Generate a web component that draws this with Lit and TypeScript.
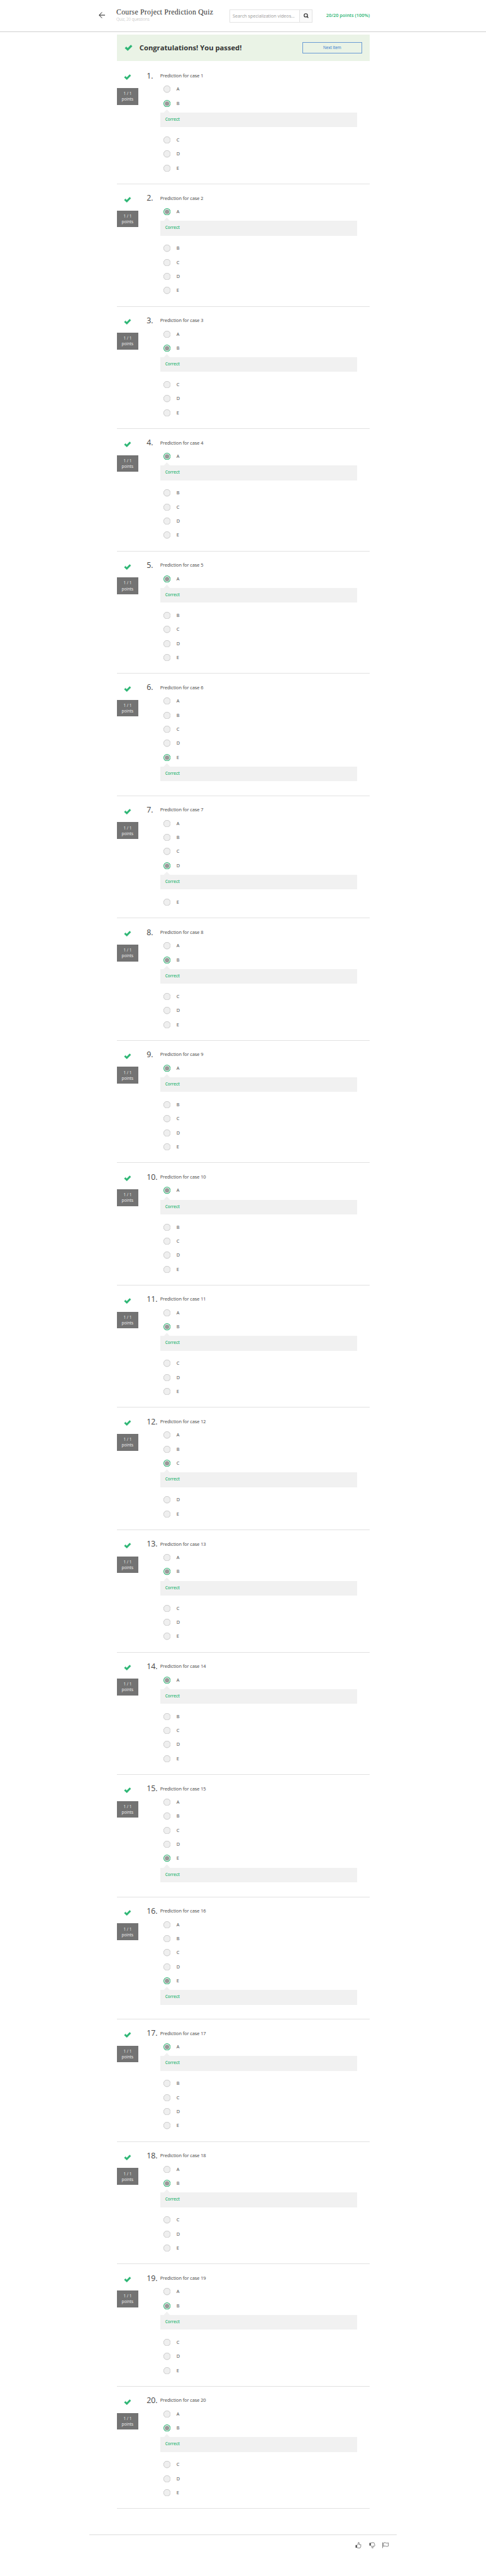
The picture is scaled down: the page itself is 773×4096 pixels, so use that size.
import { LitElement, html, css, svg, unsafeCSS } from "lit";
import { customElement, property } from "lit/decorators.js";

// Design lengths are given for a 1366px wide page and scaled to 773px.
const u = (n: number) => unsafeCSS(`${((n * 773) / 1366).toFixed(3)}px`);

const GREEN = css`#2ab573`;

const checkIcon = svg`<path d="M1.2 8.9 L4.6 5.6 L8.3 9.2 L16.2 1 L19.6 4.2 L8.4 15.6 Z" fill="#2ab573" stroke="#2ab573" stroke-width="1" stroke-linejoin="round"/>`;

@customElement("quiz-question")
export class QuizQuestion extends LitElement {
  @property({ type: Number }) number = 1;
  @property() answer = "A";

  static styles = css`
    :host {
      display: flex;
      box-sizing: border-box;
      height: ${u(343.8)};
      border-bottom: 1px solid #e2e2e2;
      align-items: flex-start;
    }
    .side {
      width: ${u(61)};
      padding-top: ${u(35.2)};
      display: flex;
      flex-direction: column;
      align-items: center;
      flex: none;
    }
    .check {
      width: ${u(21)};
      height: ${u(16.5)};
      display: block;
    }
    .badge {
      margin-top: ${u(22)};
      width: 100%;
      height: ${u(47)};
      box-sizing: border-box;
      padding-top: ${u(7.4)};
      background: #737373;
      color: #eee;
      font-size: ${u(11.3)};
      line-height: ${u(16)};
      text-align: center;
    }
    .number {
      width: ${u(38)};
      margin-left: ${u(23)};
      padding-top: ${u(23.4)};
      font-size: ${u(22)};
      line-height: ${u(30)};
      white-space: nowrap;
      color: #444;
      flex: none;
    }
    .body {
      width: ${u(553)};
      padding-top: ${u(29.3)};
    }
    .title {
      font-size: ${u(13.1)};
      line-height: ${u(20)};
      height: ${u(28.1)};
      letter-spacing: ${u(-0.15)};
      white-space: nowrap;
      color: #444;
    }
    .option {
      height: ${u(39.5)};
      display: flex;
      align-items: center;
      padding-left: ${u(9)};
      gap: ${u(17.4)};
      font-size: ${u(13)};
      line-height: ${u(20)};
      color: #444;
    }
    .radio {
      width: ${u(20)};
      height: ${u(20)};
      display: block;
    }
    .feedback {
      margin: ${u(6)} 0 ${u(16.2)};
      height: ${u(41.3)};
      box-sizing: border-box;
      padding-left: ${u(14.2)};
      background: #f1f1f1;
      color: ${GREEN};
      font-size: ${u(11.4)};
      font-weight: 600;
      line-height: ${u(38)};
      position: relative;
    }
    .feedback::before {
      content: "";
      position: absolute;
      left: ${u(10)};
      top: ${u(-9)};
      width: ${u(18)};
      height: ${u(9.5)};
      background: #f1f1f1;
      clip-path: polygon(50% 0, 100% 100%, 0 100%);
    }
  `;

  private radio(on: boolean) {
    return on
      ? html`<svg class="radio" viewBox="0 0 20 20">
          <circle cx="10" cy="10" r="9.1" fill="#efefef" stroke="#2ab573" stroke-width="1.8" />
          <circle cx="10" cy="10" r="6.2" fill="#999" />
        </svg>`
      : html`<svg class="radio" viewBox="0 0 20 20">
          <circle cx="10" cy="10" r="9.5" fill="#efefef" stroke="#a9a9a9" stroke-width="1" />
        </svg>`;
  }

  render() {
    return html`
      <div class="side">
        <svg class="check" viewBox="0 0 21 16.5">${checkIcon}</svg>
        <div class="badge">1 / 1<br />points</div>
      </div>
      <div class="number">${this.number}.</div>
      <div class="body">
        <div class="title">Prediction for case ${this.number}</div>
        ${["A", "B", "C", "D", "E"].map(
          (o) => html`
            <div class="option">${this.radio(o === this.answer)}<span>${o}</span></div>
            ${o === this.answer ? html`<div class="feedback">Correct</div>` : ""}
          `
        )}
      </div>
    `;
  }
}

@customElement("app-root")
export class AppRoot extends LitElement {
  static styles = css`
    :host {
      display: flex;
      flex-direction: column;
      width: 773px;
      height: 4096px;
      overflow: hidden;
      background: #fff;
      font-family: "Open Sans", "Noto Sans", sans-serif;
    }
    .header {
      box-sizing: border-box;
      height: ${u(89.6)};
      border-bottom: 1px solid #cfcfcf;
      display: flex;
      align-items: flex-start;
      padding-left: ${u(277)};
      white-space: nowrap;
      flex: none;
    }
    .back {
      width: ${u(18)};
      height: ${u(18)};
      margin-top: ${u(33.5)};
      flex: none;
    }
    .heading {
      width: ${u(318)};
      margin-left: ${u(32)};
      padding-top: ${u(21.5)};
      flex: none;
    }
    .title {
      font-family: "Liberation Serif", serif;
      font-size: ${u(21)};
      line-height: ${u(28)};
      letter-spacing: ${u(0.36)};
      color: #333;
    }
    .subtitle {
      font-size: ${u(11.2)};
      line-height: ${u(12)};
      font-weight: 300;
      color: #aaa;
    }
    .search {
      box-sizing: border-box;
      width: ${u(234)};
      height: ${u(37)};
      margin-top: ${u(26)};
      border: 1px solid #e3e3e3;
      display: flex;
      flex: none;
    }
    .placeholder {
      flex: 1;
      padding-left: ${u(7.2)};
      font-size: ${u(12.7)};
      line-height: ${u(33.5)};
      color: #999;
    }
    .go {
      width: ${u(34)};
      border-left: 1px solid #e3e3e3;
      background: #fafafa;
      display: flex;
      align-items: center;
      justify-content: center;
    }
    .go svg {
      width: ${u(14)};
      height: ${u(14)};
    }
    .score {
      margin-left: ${u(37.8)};
      padding-top: ${u(33)};
      font-size: ${u(13)};
      line-height: ${u(20)};
      font-weight: 600;
      color: ${GREEN};
    }
    .main {
      width: ${u(711)};
      margin-left: ${u(328)};
      flex: none;
    }
    .banner {
      margin-top: ${u(7.4)};
      height: ${u(75)};
      box-sizing: border-box;
      padding: 0 ${u(22)};
      background: #eaf3e6;
      display: flex;
      align-items: center;
      white-space: nowrap;
    }
    .banner .check {
      width: ${u(23)};
      height: ${u(18)};
      flex: none;
    }
    .congrats {
      flex: 1;
      margin-left: ${u(19)};
      font-size: ${u(19.85)};
      line-height: ${u(30)};
      font-weight: 700;
      color: #333;
    }
    .next {
      box-sizing: border-box;
      width: ${u(167)};
      height: ${u(32)};
      border: 1px solid #6a9cd4;
      color: #2a73cc;
      font-size: ${u(11.2)};
      line-height: ${u(28.5)};
      letter-spacing: ${u(-0.1)};
      text-align: center;
    }
    .questions {
      margin-top: ${u(2)};
    }
    .footer {
      box-sizing: border-box;
      width: ${u(864)};
      margin: ${u(72)} 0 0 ${u(251)};
      border-top: 1px solid #dcdcdc;
      padding: ${u(18.5)} ${u(22)} 0 0;
      display: flex;
      justify-content: flex-end;
      gap: ${u(20)};
      flex: none;
    }
    .footer svg {
      width: ${u(18)};
      height: ${u(18)};
      display: block;
    }
  `;

  private answers = "BABAAEDBAABCBAEEABBB".split("");

  render() {
    const thumb = svg`
      <path d="M1 8.5 H4.2 V16 H1 Z" fill="#444"/>
      <path d="M4.6 8.8 C7 7.6 8.4 5.4 8.6 1.6 C8.8 0.4 11.2 0.6 11.2 3 C11.2 4.8 10.6 5.8 10.3 7 H15 C16.6 7.2 16.4 9 15.6 9.4 C16.4 10.2 16 11.6 15.4 11.9 C16 12.8 15.4 14 14.8 14.3 C15 15.6 14.2 16.6 13 16.7 C9.6 17 7.6 16.8 4.6 15.8 Z" fill="none" stroke="#444" stroke-width="1.2" stroke-linejoin="round"/>`;
    return html`
      <div class="header">
        <svg class="back" viewBox="0 0 18 18" fill="none" stroke="#111" stroke-width="1.7">
          <path d="M17.8 9 H1.5 M9.2 0.9 L1.3 9 L9.2 17.1" />
        </svg>
        <div class="heading">
          <div class="title">Course Project Prediction Quiz</div>
          <div class="subtitle">Quiz, 20 questions</div>
        </div>
        <div class="search">
          <div class="placeholder">Search specialization videos...</div>
          <div class="go">
            <svg viewBox="0 0 14 14" fill="none" stroke="#222">
              <circle cx="6" cy="6" r="4.7" stroke-width="2" />
              <path d="M9.4 9.4 L13 13" stroke-width="2.4" />
            </svg>
          </div>
        </div>
        <div class="score">20/20 points (100%)</div>
      </div>
      <div class="main">
        <div class="banner">
          <svg class="check" viewBox="0 0 21 16.5">${checkIcon}</svg>
          <div class="congrats">Congratulations! You passed!</div>
          <div class="next">Next Item</div>
        </div>
        <div class="questions">
          ${this.answers.map((a, i) => html`<quiz-question .number=${i + 1} .answer=${a}></quiz-question>`)}
        </div>
      </div>
      <div class="footer">
        <svg viewBox="0 0 18 18">${thumb}</svg>
        <svg viewBox="0 0 18 18"><g transform="matrix(1 0 0 -1 0 18.5)">${thumb}</g></svg>
        <svg viewBox="0 0 18 18" fill="none" stroke="#444" stroke-width="1.2">
          <path d="M1 1 V17 M3.2 3 C6 0.8 8.4 1.6 10 2.4 C12.4 3.6 14.6 3 17.2 2.2 V11.2 C14.6 12.6 12.4 12.6 10 11.6 C8 10.8 6 10.6 3.2 12.4 Z" />
        </svg>
      </div>
    `;
  }
}
